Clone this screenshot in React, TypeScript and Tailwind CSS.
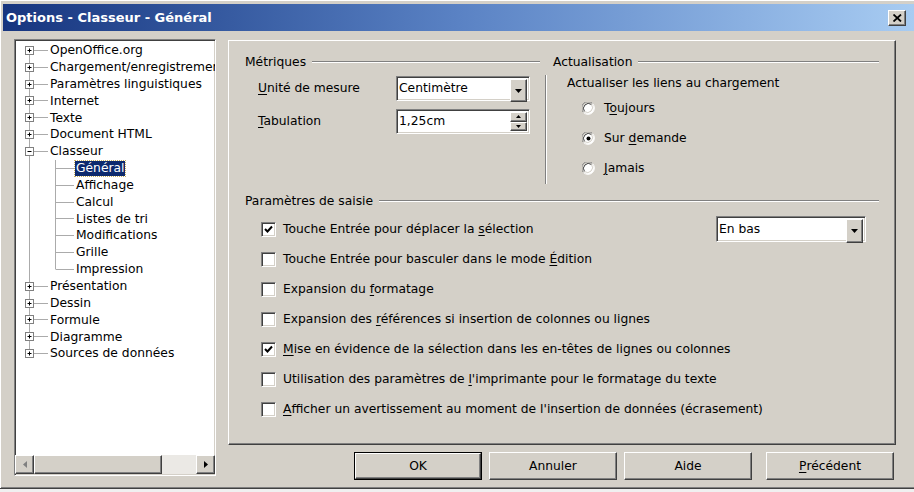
import React from 'react';

type TreeNode = {
  label: string;
  kind: 'plus' | 'minus' | 'child';
  selected?: boolean;
  last?: boolean;
};

const tree: TreeNode[] = [
  { label: 'OpenOffice.org', kind: 'plus' },
  { label: 'Chargement/enregistrement', kind: 'plus' },
  { label: 'Paramètres linguistiques', kind: 'plus' },
  { label: 'Internet', kind: 'plus' },
  { label: 'Texte', kind: 'plus' },
  { label: 'Document HTML', kind: 'plus' },
  { label: 'Classeur', kind: 'minus' },
  { label: 'Général', kind: 'child', selected: true },
  { label: 'Affichage', kind: 'child' },
  { label: 'Calcul', kind: 'child' },
  { label: 'Listes de tri', kind: 'child' },
  { label: 'Modifications', kind: 'child' },
  { label: 'Grille', kind: 'child' },
  { label: 'Impression', kind: 'child', last: true },
  { label: 'Présentation', kind: 'plus' },
  { label: 'Dessin', kind: 'plus' },
  { label: 'Formule', kind: 'plus' },
  { label: 'Diagramme', kind: 'plus' },
  { label: 'Sources de données', kind: 'plus', last: true },
];

// classic 3D frames
const raised =
  'border border-t-white border-l-white border-r-[#404040] border-b-[#404040] shadow-[inset_-1px_-1px_0_#808080]';
const sunken =
  'border border-t-[#808080] border-l-[#808080] border-r-white border-b-white shadow-[inset_1px_1px_0_#404040,inset_-1px_-1px_0_#d4d0c8]';

const LINE = '#ababab';

function TreeLines({ node, first }: { node: TreeNode; first: boolean }) {
  if (node.kind === 'child') {
    return (
      <svg width="58" height="17" className="shrink-0">
        <line x1="13.5" y1="0" x2="13.5" y2="17" stroke={LINE} />
        <line x1="39.5" y1="0" x2="39.5" y2={node.last ? 8.5 : 17} stroke={LINE} />
        <line x1="40" y1="8.5" x2="58" y2="8.5" stroke={LINE} />
      </svg>
    );
  }
  return (
    <svg width="32" height="17" className="shrink-0">
      <line x1="13.5" y1={first ? 8.5 : 0} x2="13.5" y2={node.last ? 8.5 : 17} stroke={LINE} />
      <line x1="18" y1="8.5" x2="32" y2="8.5" stroke={LINE} />
      <rect x="9.5" y="4.5" width="8" height="8" fill="#fff" stroke="#808080" />
      <line x1="11.5" y1="8.5" x2="15.5" y2="8.5" stroke="#000" />
      {node.kind === 'plus' && <line x1="13.5" y1="6.5" x2="13.5" y2="10.5" stroke="#000" />}
    </svg>
  );
}

function Arrow({ dir, color = '#000' }: { dir: 'down' | 'up' | 'left' | 'right'; color?: string }) {
  const pts = {
    down: '0,0 7,0 3.5,4',
    up: '0,4 7,4 3.5,0',
    left: '4,0 4,7 0,3.5',
    right: '0,0 0,7 4,3.5',
  }[dir];
  const w = dir === 'down' || dir === 'up' ? 7 : 4;
  const h = dir === 'down' || dir === 'up' ? 4 : 7;
  return (
    <svg width={w} height={h}>
      <polygon points={pts} fill={color} />
    </svg>
  );
}

function GroupHeader({ label, pad = '' }: { label: string; pad?: string }) {
  return (
    <div className={`flex items-center h-4 ${pad}`}>
      <span className="whitespace-nowrap">{label}</span>
      <div className="flex-1 ml-[6px] h-[2px] border-t border-t-[#808080] border-b border-b-white" />
    </div>
  );
}

function Combo({ value, className }: { value: string; className: string }) {
  return (
    <div className={`${sunken} bg-white flex items-center ${className}`}>
      <span className="flex-1 pl-[2px] whitespace-nowrap">{value}</span>
      <div className={`${raised} bg-[#d4d0c8] w-[17px] h-full flex items-center justify-center mr-[2px] my-[2px] self-stretch`}>
        <Arrow dir="down" />
      </div>
    </div>
  );
}

function Spin({ value }: { value: string }) {
  return (
    <div className={`${sunken} bg-white flex items-center w-[134px] h-[25px]`}>
      <span className="flex-1 pl-[2px]">{value}</span>
      <div className="flex flex-col w-[17px] self-stretch py-[2px] mr-[2px]">
        <div className={`${raised} bg-[#d4d0c8] flex-1 flex items-center justify-center`}>
          <svg width="5" height="3">
            <polygon points="0,3 5,3 2.5,0" fill="#000" />
          </svg>
        </div>
        <div className={`${raised} bg-[#d4d0c8] flex-1 flex items-center justify-center`}>
          <svg width="5" height="3">
            <polygon points="0,0 5,0 2.5,3" fill="#000" />
          </svg>
        </div>
      </div>
    </div>
  );
}

function Radio({ checked }: { checked?: boolean }) {
  return (
    <svg width="13" height="13" className="shrink-0">
      <circle cx="6.5" cy="6.5" r="5.5" fill="#fff" />
      <path d="M1.5 10.5 A6 6 0 0 1 10.5 1.5" fill="none" stroke="#808080" />
      <path d="M2.5 9.5 A5 5 0 0 1 9.5 2.5" fill="none" stroke="#404040" />
      <path d="M1.5 10.5 A6 6 0 0 0 10.5 1.5" fill="none" stroke="#fff" />
      <path d="M2.5 9.5 A5 5 0 0 0 9.5 2.5" fill="none" stroke="#d4d0c8" />
      {checked && <circle cx="6.5" cy="6.5" r="2" fill="#000" />}
    </svg>
  );
}

function Check({ checked }: { checked?: boolean }) {
  return (
    <div className={`${sunken} bg-white w-[15px] h-[15px] shrink-0 flex items-center justify-center`}>
      {checked && (
        <svg width="9" height="9">
          <polyline points="1,4 3.5,6.5 8,1.5" fill="none" stroke="#000" strokeWidth="2" />
        </svg>
      )}
    </div>
  );
}

const u = (s: string) => <span className="underline underline-offset-2">{s}</span>;

const checks: { checked?: boolean; text: React.ReactNode }[] = [
  { checked: true, text: <>Touche Entrée pour déplacer la {u('s')}élection</> },
  { text: <>Touche Entrée pour basculer dans le mode {u('É')}dition</> },
  { text: <>Expansion du {u('f')}ormatage</> },
  { text: <>Expansion des {u('r')}éférences si insertion de colonnes ou lignes</> },
  { checked: true, text: <>{u('M')}ise en évidence de la sélection dans les en-têtes de lignes ou colonnes</> },
  { text: <>Utilisation des paramètres de {u('l')}'imprimante pour le formatage du texte</> },
  { text: <>{u('A')}fficher un avertissement au moment de l'insertion de données (écrasement)</> },
];

function Button({ children, isDefault }: { children: React.ReactNode; isDefault?: boolean }) {
  return (
    <div className={isDefault ? 'border border-black' : ''}>
      <div
        className={`${raised} bg-[#d4d0c8] flex items-center justify-center ${
          isDefault ? 'w-[126px] h-[26px]' : 'w-[128px] h-[28px]'
        }`}
      >
        {children}
      </div>
    </div>
  );
}

export default function App() {
  return (
    <div className="w-[914px] h-[492px] overflow-hidden bg-[#f0f0f0] text-black text-[12.3px] font-['DejaVu_Sans',sans-serif]">
      <div className="h-[489px] bg-[#d4d0c8] flex flex-col pt-[4px] pl-[3px] border-b border-b-[#404040] shadow-[inset_1px_1px_0_#ffffff,inset_0_-1px_0_#808080]">
        {/* title bar */}
        <div className="h-[27px] shrink-0 flex items-center pl-[3px] pr-[8px] bg-gradient-to-r from-[#17357f] via-[#5a82c4] to-[#a8ccf2]">
          <span className="flex-1 text-white font-bold text-[13px]">Options - Classeur - Général</span>
          <div className={`${raised} bg-[#d4d0c8] w-[18px] h-[16px] flex items-center justify-center`}>
            <svg width="9" height="8">
              <path d="M0.5 0.5 L8 7.5 M8 0.5 L0.5 7.5" stroke="#000" strokeWidth="1.8" />
            </svg>
          </div>
        </div>

        <div className="flex flex-1 pl-[11px] pt-[8px]">
          {/* tree */}
          <div className={`${sunken} bg-white w-[202px] h-[437px] flex flex-col overflow-hidden`}>
            <div className="flex-1 pt-[2px] pl-[1px] overflow-hidden">
              {tree.map((node, i) => (
                <div key={node.label} className="h-[16.85px] flex items-center whitespace-nowrap">
                  <TreeLines node={node} first={i === 0} />
                  {node.selected ? (
                    <span className="ml-[1px] px-[1px] bg-[#0d2a6e] text-white outline-1 outline-dotted outline-[#c8b060] leading-[15px]">
                      {node.label}
                    </span>
                  ) : (
                    <span className="ml-[2px]">{node.label}</span>
                  )}
                </div>
              ))}
            </div>
            {/* horizontal scrollbar */}
            <div className="h-[19px] flex mb-[1px]">
              <div className={`${raised} bg-[#d4d0c8] w-[19px] flex items-center justify-center`}>
                <Arrow dir="left" color="#808080" />
              </div>
              <div className={`${raised} bg-[#d4d0c8] w-[128px]`} />
              <div className="flex-1 bg-[#ebe9e5]" />
              <div className={`${raised} bg-[#d4d0c8] w-[19px] flex items-center justify-center`}>
                <Arrow dir="right" />
              </div>
            </div>
          </div>

          <div className="flex flex-col ml-[12px] pt-[1px]">
            {/* tab page */}
            <div className="w-[668px] h-[405px] border border-t-white border-l-white border-r-[#404040] border-b-[#404040] shadow-[inset_-1px_-1px_0_#808080] px-[16px] pt-[13px]">
              <div className="flex">
                <div className="w-[295px]">
                  <GroupHeader label="Métriques" />
                  <div className="flex items-center mt-[6px] pl-[13px] h-[25px]">
                    <span className="w-[138px]">{u('U')}nité de mesure</span>
                    <Combo value="Centimètre" className="w-[134px] h-[25px]" />
                  </div>
                  <div className="flex items-center mt-[8px] pl-[13px] h-[25px]">
                    <span className="w-[138px]">{u('T')}abulation</span>
                    <Spin value="1,25cm" />
                  </div>
                </div>
                <div className="flex-1 ml-[5px]">
                  <GroupHeader label="Actualisation" pad="pl-[8px]" />
                  <div className="mt-[5px] border-l border-l-[#808080] shadow-[inset_1px_0_0_#ffffff] pl-[21px] pb-[1px]">
                    <div className="h-4 flex items-center">Actualiser les liens au chargement</div>
                    <div className="pl-[15px] mt-[2px]">
                      <div className="h-[30px] flex items-center gap-[9px]">
                        <Radio />
                        <span>T{u('o')}ujours</span>
                      </div>
                      <div className="h-[30px] flex items-center gap-[9px]">
                        <Radio checked />
                        <span>Sur {u('d')}emande</span>
                      </div>
                      <div className="h-[30px] flex items-center gap-[9px]">
                        <Radio />
                        <span>{u('J')}amais</span>
                      </div>
                    </div>
                  </div>
                </div>
              </div>

              <div className="mt-[9px]">
                <GroupHeader label="Paramètres de saisie" />
                <div className="mt-[5px] pl-[16px]">
                  {checks.map((c, i) => (
                    <div key={i} className="h-[30px] flex items-center">
                      <Check checked={c.checked} />
                      <span className="ml-[7px] flex-1 whitespace-nowrap">{c.text}</span>
                      {i === 0 && <Combo value="En bas" className="w-[150px] h-[26px] mr-[13px]" />}
                    </div>
                  ))}
                </div>
              </div>
            </div>

            {/* dialog buttons */}
            <div className="flex justify-end items-center mt-[7px] pr-[2px] gap-[7px]">
              <Button isDefault>OK</Button>
              <Button>Annuler</Button>
              <Button>Aide</Button>
              <div className="ml-[7px]">
                <Button>{u('P')}récédent</Button>
              </div>
            </div>
          </div>
        </div>
      </div>
    </div>
  );
}
